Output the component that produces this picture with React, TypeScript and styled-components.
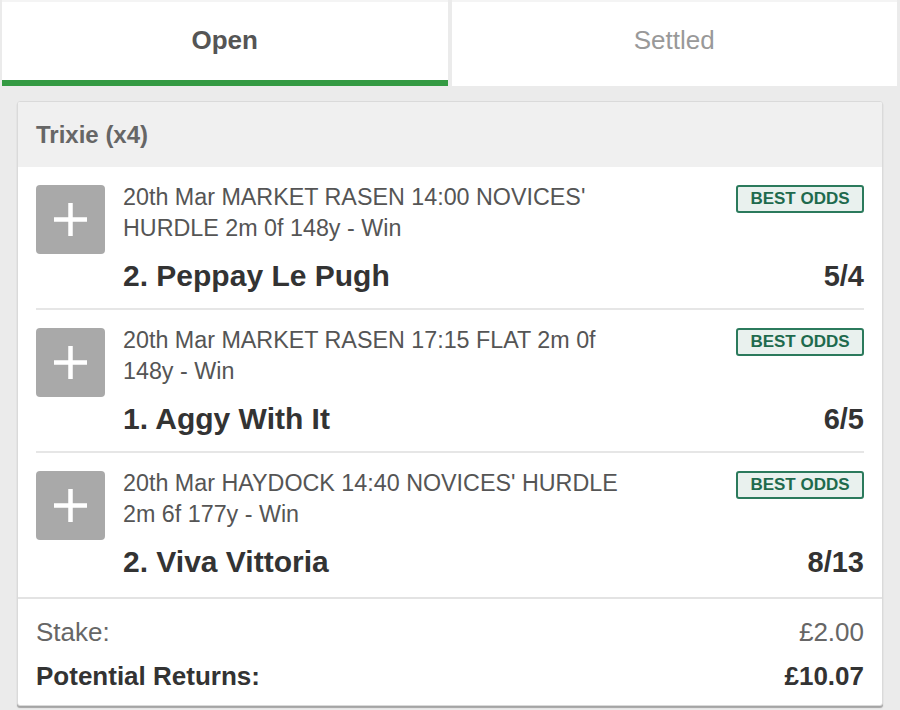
import React from "react";
import styled, { createGlobalStyle } from "styled-components";

const GlobalStyle = createGlobalStyle`
  html, body {
    margin: 0;
    padding: 0;
    background: #ebebeb;
  }

  body {
    font-family: "Liberation Sans", Arial, Helvetica, sans-serif;
    height: 710px;
    overflow: hidden;
  }
`;

const selections = [
  {
    event: "20th Mar MARKET RASEN 14:00 NOVICES' HURDLE 2m 0f 148y - Win",
    runner: "2. Peppay Le Pugh",
    odds: "5/4",
  },
  {
    event: "20th Mar MARKET RASEN 17:15 FLAT 2m 0f 148y - Win",
    runner: "1. Aggy With It",
    odds: "6/5",
  },
  {
    event: "20th Mar HAYDOCK 14:40 NOVICES' HURDLE 2m 6f 177y - Win",
    runner: "2. Viva Vittoria",
    odds: "8/13",
  },
];

function PlusIcon() {
  return (
    <svg width="33" height="33" viewBox="0 0 33 33">
      <path d="M16.5 0v33M0 16.5h33" stroke="#fff" strokeWidth="4.5" fill="none" />
    </svg>
  );
}

export default function App() {
  return (
    <>
      <GlobalStyle />
      <Tabs>
        <Tab $active>Open</Tab>
        <Tab>Settled</Tab>
      </Tabs>

      <Card>
        <CardHeader>Trixie (x4)</CardHeader>

        {selections.map((s, i) => (
          <Selection key={i} $last={i === selections.length - 1}>
            <ExpandButton>
              <PlusIcon />
            </ExpandButton>
            <Body>
              <TopLine>
                <EventName>{s.event}</EventName>
                <Badge>BEST ODDS</Badge>
              </TopLine>
              <RunnerLine>
                <Runner>{s.runner}</Runner>
                <Odds>{s.odds}</Odds>
              </RunnerLine>
            </Body>
          </Selection>
        ))}

        <Summary>
          <SummaryRow>
            <span>Stake:</span>
            <span>£2.00</span>
          </SummaryRow>
          <SummaryRow $strong>
            <span>Potential Returns:</span>
            <span>£10.07</span>
          </SummaryRow>
        </Summary>
      </Card>
    </>
  );
}

const Tabs = styled.nav`
  display: flex;
  gap: 4px;
  padding: 0 3px 0 2px;
`;

const Tab = styled.div<{ $active?: boolean }>`
  flex: 1;
  height: 80px;
  line-height: 80px;
  text-align: center;
  background: #fff;
  font-size: 26px;
  font-weight: ${(p) => (p.$active ? 700 : 400)};
  color: ${(p) => (p.$active ? "#555" : "#999")};
  border-bottom: 6px solid ${(p) => (p.$active ? "#349a43" : "#fff")};
  box-shadow: inset 0 2px 0 #f4f4f4;
`;

const Card = styled.section`
  margin: 15px 17px 0;
  background: #fff;
  border: 1px solid #dadada;
  border-radius: 3px;
  box-shadow: 0 2px 1px rgba(0, 0, 0, 0.3);
  overflow: hidden;
`;

const CardHeader = styled.header`
  height: 65px;
  display: flex;
  align-items: center;
  padding: 0 18px;
  background: #f0f0f0;
  font-size: 24px;
  font-weight: 700;
  color: #666;
`;

const Selection = styled.div<{ $last?: boolean }>`
  display: flex;
  gap: 18px;
  margin: 0 18px;
  padding: 18px 0 ${(p) => (p.$last ? "17px" : "14px")};
  border-bottom: ${(p) => (p.$last ? "none" : "2px solid #e6e6e6")};
`;

const ExpandButton = styled.div`
  flex: none;
  width: 69px;
  height: 69px;
  border-radius: 4px;
  background: #a9a9a9;
  display: flex;
  align-items: center;
  justify-content: center;
`;

const Body = styled.div`
  flex: 1;
  min-width: 0;
`;

const TopLine = styled.div`
  display: flex;
  justify-content: space-between;
  align-items: flex-start;
`;

const EventName = styled.div`
  max-width: 505px;
  margin-top: -3px;
  font-size: 23.3px;
  line-height: 31px;
  color: #555;
`;

const Badge = styled.span`
  flex: none;
  box-sizing: border-box;
  width: 128px;
  height: 28px;
  display: flex;
  align-items: center;
  justify-content: center;
  border: 2px solid #2b7a5c;
  border-radius: 3px;
  background: #e9f1ee;
  color: #1e6a4d;
  font-size: 17px;
  font-weight: 700;
`;

const RunnerLine = styled.div`
  display: flex;
  justify-content: space-between;
  align-items: baseline;
  margin-top: 14px;
  height: 36px;
  line-height: 36px;
  color: #333;
`;

const Runner = styled.span`
  font-size: 30px;
  font-weight: 700;
`;

const Odds = styled.span`
  font-size: 29px;
  font-weight: 700;
`;

const Summary = styled.footer`
  border-top: 2px solid #e3e3e3;
  padding: 11px 18px 7px;
`;

const SummaryRow = styled.div<{ $strong?: boolean }>`
  display: flex;
  justify-content: space-between;
  line-height: 44px;
  font-size: 26px;
  font-weight: ${(p) => (p.$strong ? 700 : 400)};
  color: ${(p) => (p.$strong ? "#333" : "#666")};
`;
